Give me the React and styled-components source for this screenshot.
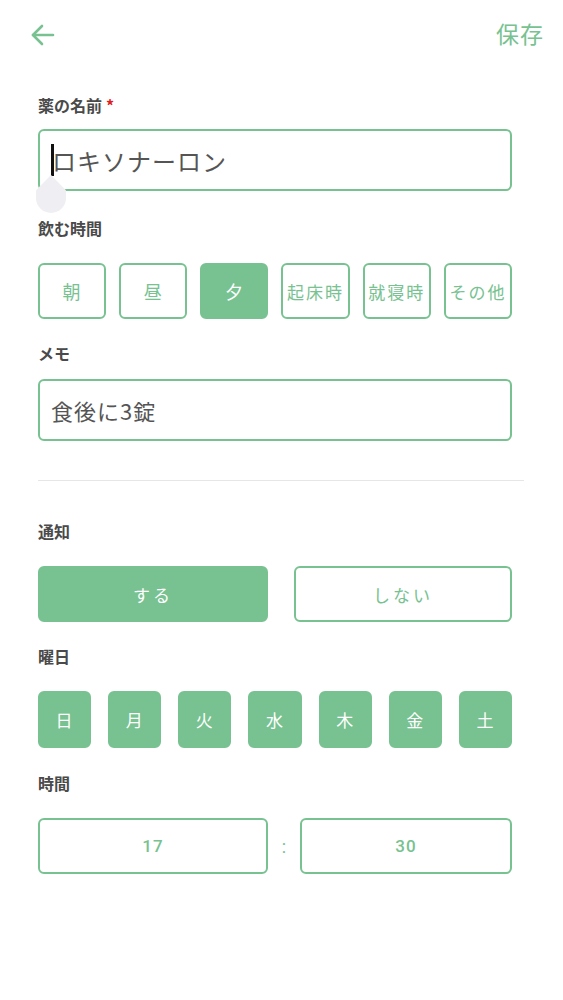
import styled, { createGlobalStyle } from "styled-components";

const GREEN = "#77c290";

const GlobalStyle = createGlobalStyle`
    html, body {
        margin: 0;
        padding: 0;
        background: #ffffff;
    }
    body {
        font-family: "Noto Sans CJK JP", "Noto Sans", Roboto, sans-serif;
        color: #444;
    }
`;

const Page = styled.div`
    width: 563px;
    min-height: 1000px;
    box-sizing: border-box;
    padding: 0 51px 0 38px;
`;

const TopBar = styled.div`
    height: 70px;
    display: flex;
    align-items: center;
    justify-content: space-between;
    margin-left: -10px;
    margin-right: -32px;
`;

const BackButton = styled.button`
    border: none;
    background: none;
    padding: 0;
    width: 30px;
    height: 30px;
    display: flex;
    align-items: center;
    justify-content: center;
`;

const SaveButton = styled.button`
    border: none;
    background: none;
    padding: 0;
    margin-top: -4px;
    font-family: inherit;
    font-size: 23px;
    color: ${GREEN};
    letter-spacing: 1px;
`;

const Label = styled.div`
    font-size: 16px;
    font-weight: 700;
    color: #4a4a4a;
    line-height: 20px;
    margin-top: ${(p) => p.$top || 0}px;
    margin-bottom: ${(p) => p.$bottom || 16}px;

    span {
        color: #e02020;
        margin-left: 4px;
    }
`;

const InputBox = styled.div`
    position: relative;
    height: 62px;
    box-sizing: border-box;
    border: 2px solid ${GREEN};
    border-radius: 6px;
    display: flex;
    align-items: center;
    padding-left: 11px;
    font-size: ${(p) => p.$size || 24}px;
    color: #555;
    letter-spacing: 1px;
`;

const Caret = styled.i`
    display: inline-block;
    width: 3px;
    height: 32px;
    background: #111;
    margin-right: -2px;
`;

const CaretHandle = styled.div`
    position: absolute;
    left: -4px;
    top: 44px;
    width: 30px;
    height: 38px;
    background: #efeff3;
    clip-path: polygon(50% 0, 100% 40%, 100% 100%, 0 100%, 0 40%);
    border-radius: 15px;
`;

const ChipRow = styled.div`
    display: grid;
    grid-template-columns: ${(p) => p.$cols};
    gap: ${(p) => p.$gap}px;
`;

const Chip = styled.button`
    height: ${(p) => p.$h || 56}px;
    box-sizing: border-box;
    border: 2px solid ${GREEN};
    border-radius: 6px;
    background: ${(p) => (p.$on ? GREEN : "#fff")};
    color: ${(p) => (p.$on ? "#fff" : GREEN)};
    font-family: inherit;
    font-size: ${(p) => p.$size || 17}px;
    letter-spacing: ${(p) => p.$spacing || 1}px;
    padding: 0;
    white-space: nowrap;
    display: flex;
    align-items: center;
    justify-content: center;
`;

const Divider = styled.hr`
    border: none;
    height: 1px;
    background: #e6e6e6;
    margin: 39px -12px 40px 0;
`;

const TimeRow = styled.div`
    display: flex;
    align-items: center;
`;

const TimeBox = styled.div`
    flex: ${(p) => p.$w}px 0 0;
    height: 56px;
    box-sizing: border-box;
    border: 2px solid ${GREEN};
    border-radius: 6px;
    display: flex;
    align-items: center;
    justify-content: center;
    font-family: Roboto, "Noto Sans", sans-serif;
    font-size: 17px;
    font-weight: 500;
    color: ${GREEN};
    letter-spacing: 1px;
`;

const Colon = styled.div`
    width: 32px;
    text-align: center;
    color: ${GREEN};
    font-size: 18px;
    font-family: Roboto, sans-serif;
`;

const times = [
    { name: "朝" },
    { name: "昼" },
    { name: "夕", on: true },
    { name: "起床時" },
    { name: "就寝時" },
    { name: "その他" },
];

const days = ["日", "月", "火", "水", "木", "金", "土"];

const App = () => {
    return (
        <>
            <GlobalStyle />
            <Page>
                <TopBar>
                    <BackButton aria-label="back">
                        <svg width="28" height="28" viewBox="0 0 28 28" fill="none" stroke={GREEN} strokeWidth="2.6" strokeLinecap="round" strokeLinejoin="round">
                            <path d="M24 14H4" />
                            <path d="M13 5L4 14L13 23" />
                        </svg>
                    </BackButton>
                    <SaveButton>保存</SaveButton>
                </TopBar>

                <Label $top={25} $bottom={14}>薬の名前<span>*</span></Label>
                <InputBox>
                    <Caret />ロキソナーロン
                    <CaretHandle />
                </InputBox>

                <Label $top={27} $bottom={25}>飲む時間</Label>
                <ChipRow $cols="repeat(6, 1fr)" $gap={13}>
                    {times.map((t) => (
                        <Chip key={t.name} $on={t.on} $spacing={t.name.length > 1 ? 2 : 1} $size={t.name.length > 1 ? 17 : 18}>
                            {t.name}
                        </Chip>
                    ))}
                </ChipRow>

                <Label $top={24} $bottom={16}>メモ</Label>
                <InputBox $size={22}>食後に3錠</InputBox>

                <Divider />

                <Label $bottom={25}>通知</Label>
                <ChipRow $cols="230px 218px" $gap={26}>
                    <Chip $on $spacing={3}>する</Chip>
                    <Chip $spacing={3}>しない</Chip>
                </ChipRow>

                <Label $top={24} $bottom={25}>曜日</Label>
                <ChipRow $cols="repeat(7, 1fr)" $gap={17}>
                    {days.map((d) => (
                        <Chip key={d} $on $h={57}>{d}</Chip>
                    ))}
                </ChipRow>

                <Label $top={25} $bottom={25}>時間</Label>
                <TimeRow>
                    <TimeBox $w={230}>17</TimeBox>
                    <Colon>:</Colon>
                    <TimeBox $w={212}>30</TimeBox>
                </TimeRow>
            </Page>
        </>
    );
};

export default App;
